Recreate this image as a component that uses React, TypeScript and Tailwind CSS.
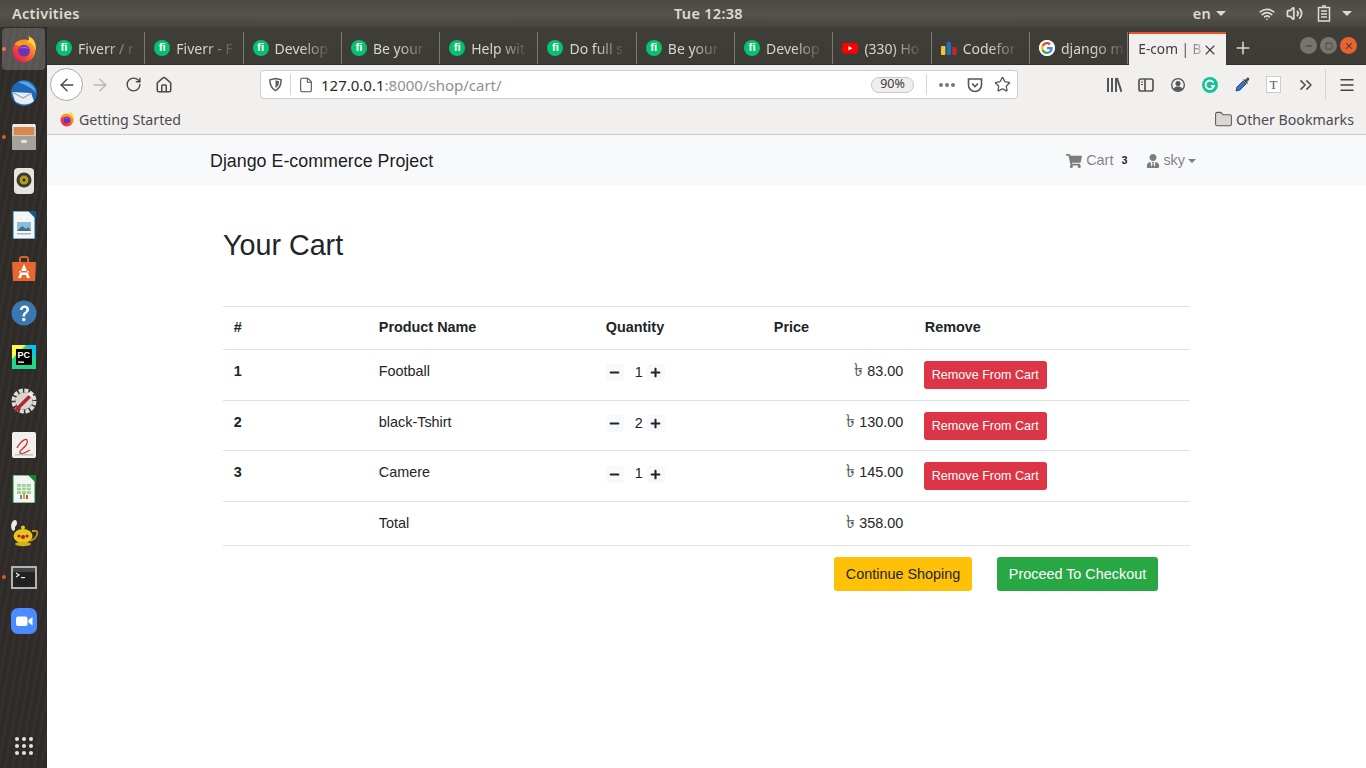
import { ArrowLeft, ArrowRight, RotateCw, Home, File, Star, ChevronsRight, Menu, X, Plus, Folder, Wifi, Volume2, Minus, Square } from "lucide-react";
import { FaShoppingCart, FaUserTie, FaMinus, FaPlus } from "react-icons/fa";

const ui = "font-['Noto_Sans',sans-serif]";

function FirefoxLogo({ size = 32 }: any) {
  return (
    <svg width={size} height={size} viewBox="0 0 32 32">
      <defs>
        <linearGradient id="ffBall" x1="0.9" y1="0.1" x2="0.1" y2="0.9">
          <stop offset="0" stopColor="#ffb02e" />
          <stop offset="0.55" stopColor="#f9552f" />
          <stop offset="1" stopColor="#e6175c" />
        </linearGradient>
      </defs>
      <circle cx="16" cy="18" r="13" fill="url(#ffBall)" />
      <path d="M21 1c2 4 0 6-3 8 6-1 10 3 11 9 2-7-1-14-8-17z" fill="#ffd43a" />
      <path d="M5 10c3-3 8-5 13-3 5 1 9 5 10 10-2-3-6-5-9-5-5 0-10 2-14-2z" fill="#ff9a1f" />
      <circle cx="16" cy="18" r="6.800" fill="#6b33b5" />
      <path d="M10 15c2-1 4-2 7-2 2 0 4 1 5 3-3-1-8-1-12-1z" fill="#a25be0" />
    </svg>
  );
}

function FiIcon() {
  return (
    <span className="flex h-4 w-4 shrink-0 items-center justify-center rounded-full bg-[#06c270] font-['Liberation_Sans',sans-serif] text-[11.5px] font-bold leading-none text-white">
      fi
    </span>
  );
}

function YoutubeIcon() {
  return (
    <svg width="16" height="16" viewBox="0 0 16 16" className="shrink-0">
      <rect x="0" y="3" width="16" height="10.5" rx="2.5" fill="#f00" />
      <path d="M6.5 6v4.5L10.5 8.2z" fill="#fff" />
    </svg>
  );
}

function CodeforcesIcon() {
  return (
    <svg width="16" height="16" viewBox="0 0 16 16" className="shrink-0">
      <rect x="0" y="6" width="4.4" height="9" rx="0.8" fill="#f5c33b" />
      <rect x="5.6" y="2" width="4.4" height="13" rx="0.8" fill="#1e6fb8" />
      <rect x="11.2" y="7" width="4.4" height="8" rx="0.8" fill="#c62828" />
    </svg>
  );
}

function GoogleIcon() {
  return (
    <svg width="16" height="16" viewBox="0 0 48 48" className="shrink-0 rounded-full bg-white">
      <circle cx="24" cy="24" r="24" fill="#fff" />
      <path fill="#ea4335" d="M24 13c3 0 5.200 1.100 6.900 2.700l5-5C32.700 7.700 28.800 6 24 6 17 6 11 10 8 15.900l5.800 4.500C15.200 16 19.200 13 24 13z" />
      <path fill="#4285f4" d="M41 24.400c0-1.300-.1-2.200-.3-3.200H24v6.400h9.700c-.4 2.300-1.700 4.200-3.700 5.500l5.600 4.400C39 34.300 41 29.800 41 24.400z" />
      <path fill="#fbbc05" d="M13.800 27.600c-.4-1.100-.6-2.300-.6-3.600s.2-2.500.6-3.600L8 15.900C6.700 18.300 6 21.100 6 24s.7 5.700 2 8.100l5.800-4.500z" />
      <path fill="#34a853" d="M24 42c4.800 0 8.800-1.600 11.600-4.300L30 33.300c-1.500 1-3.500 1.700-6 1.700-4.800 0-8.800-3-10.200-7.400L8 32.100C11 38 17 42 24 42z" />
    </svg>
  );
}

const tabs = [
  { title: "Fiverr / r", icon: <FiIcon /> },
  { title: "Fiverr - F", icon: <FiIcon /> },
  { title: "Develop", icon: <FiIcon /> },
  { title: "Be your", icon: <FiIcon /> },
  { title: "Help wit", icon: <FiIcon /> },
  { title: "Do full s", icon: <FiIcon /> },
  { title: "Be your", icon: <FiIcon /> },
  { title: "Develop", icon: <FiIcon /> },
  { title: "(330) Ho", icon: <YoutubeIcon /> },
  { title: "Codefor", icon: <CodeforcesIcon /> },
  { title: "django m", icon: <GoogleIcon /> },
];

function DockIcon({ children, running, active }: any) {
  return (
    <div className="relative flex h-[44px] w-full items-center justify-center">
      {running && <span className="absolute left-[2px] top-1/2 h-[4px] w-[4px] -translate-y-1/2 rounded-full bg-[#e95420]" />}
      {active && <span className="absolute inset-x-[2px] inset-y-px rounded-[4px] bg-white/20" />}
      <span className="relative flex">{children}</span>
    </div>
  );
}

function Dock() {
  return (
    <aside className="flex w-[47px] shrink-0 flex-col bg-[#302c29] bg-[repeating-linear-gradient(100deg,#ffffff05_0px,#ffffff05_2px,#00000010_3px,#00000000_7px)]">
      <DockIcon running active><FirefoxLogo size={28} /></DockIcon>
      <DockIcon>
        <svg width="28" height="28" viewBox="0 0 28 28">
          <circle cx="14" cy="14" r="13" fill="#1c68b5" />
          <path d="M8 3c8-3 17 2 18 11-3-4-8-7-18-11z" fill="#5ba7e6" />
          <path d="M2 13l19 1 3 8c-4 4-14 5-19 0z" fill="#e9edf2" />
          <path d="M2 13l11 6 9-5" fill="none" stroke="#9aa8b8" strokeWidth="1.200" />
        </svg>
      </DockIcon>
      <DockIcon running>
        <svg width="26" height="28" viewBox="0 0 26 28">
          <rect x="1" y="1" width="24" height="26" rx="2" fill="#c9c5bf" />
          <rect x="2" y="1" width="22" height="3" fill="#efece8" />
          <rect x="3" y="4" width="20" height="8" fill="#d9864f" />
          <rect x="1" y="13" width="24" height="14" rx="1" fill="#a5a19b" />
          <rect x="10" y="17" width="6" height="3" rx="1" fill="#e6e3df" />
        </svg>
      </DockIcon>
      <DockIcon>
        <svg width="22" height="28" viewBox="0 0 22 28">
          <rect x="1" y="1" width="20" height="26" rx="4" fill="#e6e4df" />
          <circle cx="11" cy="13" r="7.500" fill="#3b3a2e" />
          <circle cx="11" cy="13" r="4.500" fill="#b59b22" />
          <circle cx="11" cy="13" r="1.500" fill="#2d2c24" />
        </svg>
      </DockIcon>
      <DockIcon>
        <svg width="24" height="28" viewBox="0 0 24 28">
          <path d="M1 0h16l6 6v22H1z" fill="#f4f6f7" stroke="#18608f" strokeWidth="1" />
          <path d="M16 0h8v8z" fill="#0f5d8e" />
          <rect x="5" y="11" width="14" height="9" fill="#8fbcd4" />
          <path d="M5 20l5-5 4 3 2-2 3 4z" fill="#3f6f86" />
          <rect x="5" y="22" width="14" height="1.500" fill="#aab6bd" />
        </svg>
      </DockIcon>
      <DockIcon>
        <svg width="26" height="26" viewBox="0 0 26 26">
          <path d="M9 6V3a2 2 0 0 1 2-2h4a2 2 0 0 1 2 2v3" fill="none" stroke="#d9622d" strokeWidth="2" />
          <path d="M1 6h24l-1 19H2z" fill="#e8662f" />
          <path d="M13 8l-6 14h3l1-3h4l1 3h3zM8 15h10v1.500H8z" fill="#fff" />
        </svg>
      </DockIcon>
      <DockIcon>
        <svg width="26" height="26" viewBox="0 0 26 26">
          <circle cx="13" cy="13" r="12.500" fill="#3a78b0" />
          <path d="M9 10c0-6 9-6 9-.5 0 3.500-4 3.500-4 7h-2.500c0-4.500 4-4.500 4-7 0-2.500-4-2.500-4 .5z" fill="#fff" />
          <circle cx="12.800" cy="19.500" r="1.700" fill="#fff" />
        </svg>
      </DockIcon>
      <DockIcon>
        <svg width="24" height="24" viewBox="0 0 24 24">
          <rect width="24" height="24" fill="#21d789" />
          <path d="M0 0h14L0 14z" fill="#fcf84a" />
          <path d="M24 0v14L14 0z" fill="#07c3f2" />
          <rect x="4" y="4" width="16" height="16" fill="#000" />
          <rect x="6" y="16.500" width="6" height="1.300" fill="#fff" />
          <text x="5.500" y="12.500" fontSize="9" fontWeight="700" fill="#fff" fontFamily="Liberation Sans, sans-serif">PC</text>
        </svg>
      </DockIcon>
      <DockIcon>
        <svg width="26" height="26" viewBox="0 0 26 26">
          <circle cx="13" cy="13" r="10.500" fill="none" stroke="#dedcd8" strokeWidth="4" strokeDasharray="4 1.500" />
          <circle cx="13" cy="13" r="8.500" fill="#d8d5d0" />
          <path d="M5 22L18 9" stroke="#b3262e" strokeWidth="3.500" strokeLinecap="round" />
          <path d="M17 5l5 4" stroke="#f2f0ee" strokeWidth="2.500" />
        </svg>
      </DockIcon>
      <DockIcon>
        <svg width="24" height="26" viewBox="0 0 24 26">
          <rect x="0" y="0" width="24" height="26" rx="2" fill="#f2f0ec" />
          <path d="M5 16c4-8 12-12 10-5-1 5-9 7-7 10 1 1 5 0 10-3" fill="none" stroke="#c9332d" strokeWidth="1.300" />
          <rect x="3" y="22" width="18" height="1.500" fill="#c4c1bb" />
        </svg>
      </DockIcon>
      <DockIcon>
        <svg width="24" height="28" viewBox="0 0 24 28">
          <path d="M1 0h16l6 6v22H1z" fill="#f4f6f3" stroke="#1d7d32" strokeWidth="1" />
          <path d="M16 0h8v8z" fill="#11882d" />
          <rect x="5" y="9" width="14" height="10" fill="#9fd29a" />
          <path d="M5 12.300h14M5 15.600h14M9.600 9v10M14.300 9v10" stroke="#fff" strokeWidth="0.700" />
          <rect x="8" y="20" width="2" height="4" fill="#4c8cc8" />
          <rect x="11" y="18" width="2" height="6" fill="#e0a030" />
          <rect x="14" y="20" width="2" height="4" fill="#c8503c" />
        </svg>
      </DockIcon>
      <DockIcon>
        <svg width="30" height="30" viewBox="0 0 30 30">
          <path d="M4 13c-3-3-2-8 0-10s4-1 4 2-2 3-2 5 0 2-2 3z" fill="#eceae6" />
          <ellipse cx="14" cy="18" rx="9.500" ry="7" fill="#e9c61f" />
          <path d="M23 13h4c3 0 1 8-6 10" fill="none" stroke="#b79a18" strokeWidth="1.800" />
          <circle cx="14" cy="9.500" r="2" fill="#e9c61f" />
          <circle cx="10" cy="18" r="1.600" fill="#b32020" />
          <circle cx="14" cy="19" r="2" fill="#b32020" />
          <circle cx="18" cy="18" r="1.600" fill="#b32020" />
          <ellipse cx="14" cy="26" rx="8" ry="2.200" fill="#d1b019" />
        </svg>
      </DockIcon>
      <DockIcon running>
        <svg width="26" height="23" viewBox="0 0 26 23">
          <rect x="1" y="1" width="24" height="21" fill="#222" stroke="#b5b3af" strokeWidth="2" />
          <rect x="2" y="2" width="22" height="4" fill="#444" />
          <path d="M5 7l3 2-3 2" fill="none" stroke="#eee" strokeWidth="1.200" />
          <rect x="10" y="11" width="4" height="1.200" fill="#eee" />
        </svg>
      </DockIcon>
      <DockIcon>
        <svg width="26" height="26" viewBox="0 0 26 26">
          <rect width="26" height="26" rx="7" fill="#4a8cff" />
          <rect x="5" y="8.500" width="11.500" height="9.500" rx="2" fill="#fff" />
          <path d="M17.500 12l4-3v8.500l-4-3z" fill="#fff" />
        </svg>
      </DockIcon>
      <div className="mb-[13px] mt-auto grid grid-cols-3 gap-[3px] self-center">
        {[0, 1, 2, 3, 4, 5, 6, 7, 8].map((i) => (
          <span key={i} className="h-[4px] w-[4px] rounded-full bg-[#e4e2df]" />
        ))}
      </div>
    </aside>
  );
}

function Tab({ title, icon }: any) {
  return (
    <div className="flex h-[32px] w-[98.3px] items-center gap-[6px] border-r border-[#7b7972] pl-[9px]">
      {icon}
      <span className="overflow-hidden whitespace-nowrap text-[14px] text-[#d6d4ce] [mask-image:linear-gradient(to_right,#000_50%,#0002_100%)]">
        {title}
      </span>
    </div>
  );
}

function TabBar() {
  return (
    <div className="flex h-[38px] items-end border-b border-[#2f2e2a] bg-gradient-to-b from-[#403e39] to-[#3c3b36]">
      {tabs.map((t, i) => (
        <Tab key={i} title={t.title} icon={t.icon} />
      ))}
      <div className="relative -mb-px ml-[1px] flex h-[33px] w-[97px] items-center border-t-2 border-[#e95420] bg-[#f2f0ef] pl-[9px] pr-[8px] text-[13.7px] text-[#3d3c38]">
        <span className="whitespace-nowrap [mask-image:linear-gradient(to_right,#000_70%,#0004_100%)]">E-com | B</span>
        <X size={16} strokeWidth={1.600} className="ml-auto shrink-0 text-[#3d3c38]" />
      </div>
      <div className="flex h-[32px] w-[34px] items-center justify-center">
        <Plus size={20} className="text-[#dedcd7]" strokeWidth={1.800} />
      </div>
      <div className="ml-auto flex h-[37px] items-center gap-[3px] pr-[9px]">
        <span className="flex h-[17px] w-[17px] items-center justify-center rounded-full bg-[#77756e]">
          <Minus size={10} strokeWidth={2.500} className="text-[#3b3a35]" />
        </span>
        <span className="flex h-[17px] w-[17px] items-center justify-center rounded-full bg-[#77756e]">
          <Square size={8} strokeWidth={2} className="text-[#3b3a35]" />
        </span>
        <span className="flex h-[17px] w-[17px] items-center justify-center rounded-full bg-[#e9622e]">
          <X size={10} strokeWidth={2.500} className="text-[#3b3a35]" />
        </span>
      </div>
    </div>
  );
}

function Toolbar() {
  return (
    <div className="flex h-[39px] items-center bg-[#f2f0ef] pl-[3px] text-[#4a4a4a]">
      <div className="flex h-[33px] w-[33px] items-center justify-center rounded-full border border-[#aaa7a3] bg-white">
        <ArrowLeft size={20} strokeWidth={1.700} />
      </div>
      <ArrowRight size={20} strokeWidth={1.700} className="ml-[7px] text-[#b9b7b5]" />
      <RotateCw size={17} strokeWidth={2} className="ml-[15px]" />
      <Home size={18} strokeWidth={2} className="ml-[13px]" />
      <div className="ml-[87px] flex h-[29px] w-[758px] items-center rounded-[4px] border border-[#cfccc9] bg-white pl-[7px] pr-[6px]">
        <svg width="15" height="15" viewBox="0 0 16 16" className="shrink-0" fill="none" stroke="#5a5a5a" strokeWidth="1.600">
          <path d="M8 1.500l6 1.500c0 5-1 9-6 11.500C3 12 2 8 2 3z" />
          <path d="M8 3.500l3.800 1c0 3-1 5.500-3.800 7.200z" fill="#5a5a5a" stroke="none" />
        </svg>
        <span className="ml-[7px] h-[21px] w-px bg-[#d7d5d2]" />
        <File size={16} strokeWidth={1.600} className="ml-[7px] shrink-0 text-[#4f4f4f]" />
        <span className={`${ui} ml-[7px] pt-[1px] text-[15px] text-[#2a2a2e]`}>
          127.0.0.1<span className="text-[#8f8f93]">:8000/shop/cart/</span>
        </span>
        <span className={`${ui} ml-auto flex h-[16px] w-[43px] items-center justify-center rounded-full border border-[#c9c7c4] bg-[#f0efed] text-[12.5px] text-[#3c3c3c]`}>
          90%
        </span>
        <span className="ml-[12px] h-[21px] w-px bg-[#d7d5d2]" />
        <span className="ml-[12px] flex gap-[2px]">
          <i className="h-[4px] w-[4px] rounded-full bg-[#777]" />
          <i className="h-[4px] w-[4px] rounded-full bg-[#777]" />
          <i className="h-[4px] w-[4px] rounded-full bg-[#777]" />
        </span>
        <svg width="16" height="16" viewBox="0 0 16 16" className="ml-[12px]" fill="none" stroke="#555" strokeWidth="1.600">
          <path d="M1.500 2h13v6a6.500 6.500 0 0 1-13 0z" />
          <path d="M5 6.500l3 3 3-3" />
        </svg>
        <Star size={17} strokeWidth={1.800} className="ml-[11px] text-[#555]" />
      </div>
      <div className="ml-[88px] flex items-center">
        <svg width="16" height="16" viewBox="0 0 16 16" stroke="#555" strokeWidth="2" fill="none">
          <path d="M2 1v14M6 1v14M10 1v14M11 1l4.500 14" />
        </svg>
        <svg width="16" height="16" viewBox="0 0 16 16" className="ml-[16px]" stroke="#555" strokeWidth="1.700" fill="none">
          <rect x="1" y="2" width="14" height="12" rx="2" />
          <path d="M7 2v12" />
          <path d="M3 5h2M3 7.500h2" strokeWidth="1.200" />
        </svg>
        <svg width="16" height="16" viewBox="0 0 16 16" className="ml-[16px]" fill="#555">
          <path fillRule="evenodd" d="M8 1a7 7 0 1 0 0 14A7 7 0 0 0 8 1zm0 1.300a5.700 5.700 0 1 1 0 11.400A5.700 5.700 0 0 1 8 2.300z" />
          <circle cx="8" cy="6.500" r="2.500" />
          <path d="M3.500 12c1-2 2.500-2.500 4.500-2.500s3.500.5 4.500 2.500c-2.500 2.500-6.500 2.500-9 0z" />
        </svg>
        <svg width="16" height="16" viewBox="0 0 16 16" className="ml-[16px]">
          <circle cx="8" cy="8" r="8" fill="#15c39a" />
          <path d="M11.500 5.500A4.300 4.300 0 1 0 12 9H9" fill="none" stroke="#fff" strokeWidth="1.800" />
        </svg>
        <svg width="17" height="17" viewBox="0 0 17 17" className="ml-[16px]">
          <path d="M2 15l1-4 6-6 3 3-6 6z" fill="#3f6fc0" stroke="#2c4f8f" strokeWidth="1" />
          <path d="M9 4l4 4 1-1-1-1 2-2c1-2-1-3-2-2l-2 2-1-1z" fill="#4a4a4a" />
        </svg>
        <span className="ml-[15px] flex h-[17px] w-[15px] items-center justify-center border border-[#cfcdca] bg-white font-['Liberation_Serif',serif] text-[13px] leading-none text-[#555]">
          T
        </span>
        <ChevronsRight size={20} strokeWidth={2} className="ml-[15px] text-[#555]" />
        <span className="ml-[9px] h-[31px] w-px bg-[#d7d5d2]" />
        <Menu size={18} strokeWidth={2} className="ml-[12px] text-[#444]" />
      </div>
    </div>
  );
}

function BookmarksBar() {
  return (
    <div className={`${ui} flex h-[31px] items-center border-b border-[#cfccc9] bg-[#f2f0ef] pl-[12px] pr-[12px] text-[14.2px] text-[#4a4a4f]`}>
      <FirefoxLogo size={16} />
      <span className="ml-[4px] pt-px">Getting Started</span>
      <Folder size={19} strokeWidth={1.300} fill="#d9d7d4" className="ml-auto text-[#5b5b5b]" />
      <span className="ml-[3px] pt-px">Other Bookmarks</span>
    </div>
  );
}

const items = [
  { id: 1, name: "Football", qty: 1, price: "83.00" },
  { id: 2, name: "black-Tshirt", qty: 2, price: "130.00" },
  { id: 3, name: "Camere", qty: 1, price: "145.00" },
];

function QtyButton({ children }: any) {
  return (
    <span className="flex h-[17px] w-[18px] items-center justify-center rounded-[3px] bg-[#f8f9fa] text-[#212529]">
      {children}
    </span>
  );
}

function Taka() {
  return <span className="text-[18px] leading-none text-[#555]">৳</span>;
}

function Page() {
  return (
    <main className="flex-1 bg-white font-['Liberation_Sans',sans-serif] text-[14.4px] leading-[21.6px] text-[#212529]">
      <nav className="flex h-[50px] items-center bg-[#f8f9fa] pl-[163px] pr-[170px]">
        <span className="pt-[3px] text-[17.85px] text-black/90">Django E-commerce Project</span>
        <span className="ml-auto flex items-center pt-[1px] text-black/50">
          <FaShoppingCart size={16} className="ml-[1px]" />
          <span className="ml-[4px]">Cart</span>
          <span className="ml-[8px] text-[10.8px] font-bold text-[#212529]">3</span>
          <FaUserTie size={14} className="ml-[19px]" />
          <span className="ml-[3px]">sky</span>
          <span className="ml-[3px] h-0 w-0 border-x-[4px] border-t-[4px] border-x-transparent border-t-black/50" />
        </span>
      </nav>
      <div className="pl-[176px]">
        <h2 className="pt-[43px] text-[28.7px] font-normal leading-[34.5px]">Your Cart</h2>
        <table className="mt-[43px] w-[967px] table-fixed border-collapse">
          <colgroup>
            <col className="w-[145px]" />
            <col className="w-[227px]" />
            <col className="w-[168px]" />
            <col className="w-[151px]" />
            <col />
          </colgroup>
          <thead>
            <tr className="border-y border-[#dee2e6] text-left">
              <th className="px-[10.8px] py-[10.6px] font-bold">#</th>
              <th className="px-[10.8px] py-[10.6px] font-bold">Product Name</th>
              <th className="px-[10.8px] py-[10.6px] font-bold">Quantity</th>
              <th className="px-[10.8px] py-[10.6px] font-bold">Price</th>
              <th className="px-[10.8px] py-[10.6px] font-bold">Remove</th>
            </tr>
          </thead>
          <tbody>
            {items.map((it) => (
              <tr key={it.id} className="border-b border-[#dee2e6] align-top">
                <td className="p-[10.8px] font-bold">{it.id}</td>
                <td className="p-[10.8px]">{it.name}</td>
                <td className="p-[10.8px]">
                  <span className="flex items-center pt-[1px]">
                    <QtyButton><FaMinus size={11} /></QtyButton>
                    <span className="w-[23px] pl-[7px] text-center">{it.qty}</span>
                    <QtyButton><FaPlus size={11} /></QtyButton>
                  </span>
                </td>
                <td className="p-[10.8px] text-right">
                  <Taka /> {it.price}
                </td>
                <td className="p-[10.8px]">
                  <button className="-ml-px h-[28px] w-[123px] rounded-[3px] bg-[#dc3545] pt-[2px] text-[12.6px] text-white">Remove From Cart</button>
                </td>
              </tr>
            ))}
            <tr className="border-b border-[#dee2e6]">
              <td className="py-[10.9px]" />
              <td className="px-[10.8px] py-[10.9px]">Total</td>
              <td className="py-[10.9px]" />
              <td className="px-[10.8px] py-[10.9px] text-right">
                <Taka /> 358.00
              </td>
              <td className="py-[10.9px]" />
            </tr>
          </tbody>
        </table>
        <div className="mt-[11px] flex w-[935px] justify-end gap-[25px]">
          <button className="h-[34px] w-[138px] rounded-[3px] bg-[#ffc107] text-[#212529]">Continue Shoping</button>
          <button className="h-[34px] w-[161px] rounded-[3px] bg-[#28a745] text-white">Proceed To Checkout</button>
        </div>
      </div>
    </main>
  );
}

export default function App() {
  return (
    <div className="flex h-screen w-[1366px] flex-col overflow-hidden">
      <header className={`${ui} flex h-[27px] shrink-0 items-center bg-gradient-to-b from-[#4b4943] via-[#56534c] to-[#47453f] pl-[12px] pr-[14px] text-[14.5px] font-semibold tracking-[0.3px] text-[#dedbd5]`}>
        <span className="w-[662px]">Activities</span>
        <span>Tue 12:38</span>
        <span className="ml-auto flex items-center">
          <span>en</span>
          <span className="ml-[5px] h-0 w-0 border-x-[5px] border-t-[5px] border-x-transparent border-t-[#dedbd5]" />
          <Wifi size={16} strokeWidth={2.500} className="ml-[33px]" />
          <Volume2 size={17} strokeWidth={2.500} className="ml-[11px]" />
          <svg width="14" height="17" viewBox="0 0 14 17" className="ml-[14px]" fill="none" stroke="#dedbd5" strokeWidth="1.500">
            <rect x="1.500" y="2.500" width="11" height="13.500" />
            <path d="M5 1h4M4 6h6M4 9h6M4 12h6" />
          </svg>
          <span className="ml-[11px] h-0 w-0 border-x-[5px] border-t-[5px] border-x-transparent border-t-[#dedbd5]" />
        </span>
      </header>
      <div className="flex min-h-0 flex-1">
        <Dock />
        <div className="flex min-w-0 flex-1 flex-col">
          <div className={ui}>
            <TabBar />
          </div>
          <Toolbar />
          <BookmarksBar />
          <Page />
        </div>
      </div>
    </div>
  );
}
